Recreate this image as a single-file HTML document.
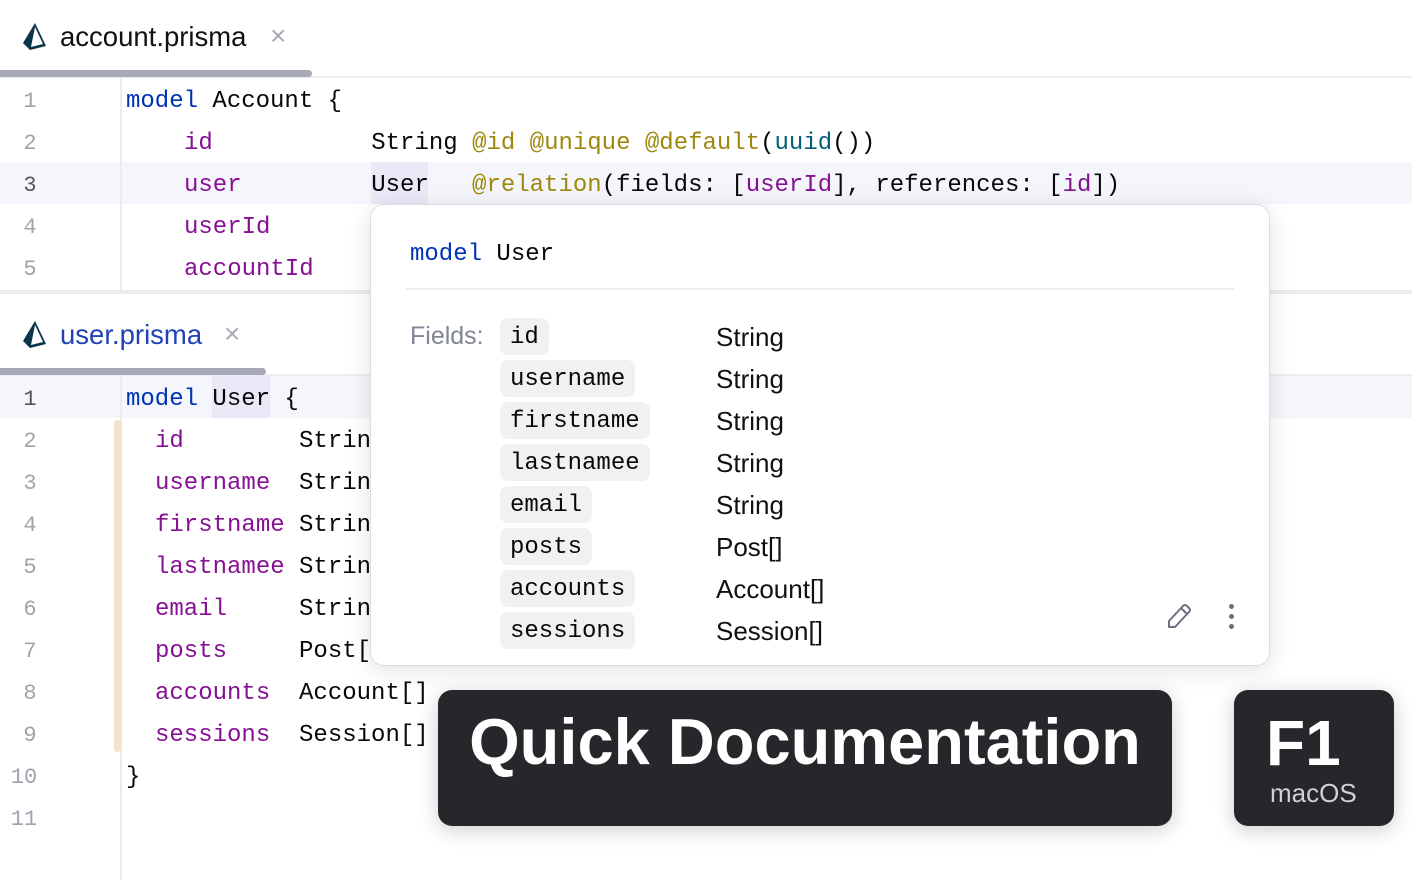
<!DOCTYPE html><html><head><meta charset="utf-8"><style>
*{margin:0;padding:0;box-sizing:border-box}
body{width:1412px;height:880px;overflow:hidden;background:#fff;position:relative;font-family:"Liberation Sans",sans-serif}
.a{position:absolute}
.m{font-family:"Liberation Mono",monospace;font-size:24px;white-space:pre;color:#080808}
.ln{position:absolute;left:0;width:60px;text-align:center;font-family:"Liberation Mono",monospace;font-size:22px;color:#a0a3ad}
.k{color:#0033b3}.p{color:#871094}.an{color:#9e880d}.t{color:#00627a}
.chip{position:absolute;left:500px;height:37px;background:#f1f1f3;border-radius:8px;padding:0 10px;line-height:40px}
.ty{position:absolute;left:716px;font-size:26px;color:#111;font-family:"Liberation Sans",sans-serif}
</style></head><body>
<svg class="a" style="left:22px;top:22px" width="26" height="30" viewBox="0 0 26 30"><path d="M13 1 L1 21 L8 28 L24 24 Z" fill="#0c344b"/><path d="M13 5 L9 25 L21 22 Z" fill="#fff"/></svg>
<div class="a" style="left:60px;top:21px;font-size:27.5px;color:#111">account.prisma</div>
<div class="a" style="left:270px;top:20px;font-size:28px;color:#a7aab6">×</div>
<div class="a" style="left:0;top:76px;width:1412px;height:2px;background:#ebecf0"></div>
<div class="a" style="left:0;top:70px;width:312px;height:7px;background:#a7aab6;border-radius:0 4px 4px 0"></div>
<div class="a" style="left:0;top:162px;width:1412px;height:42px;background:#f5f6fb"></div>
<div class="a" style="left:371px;top:162px;width:57px;height:42px;background:#ebe8f8"></div>
<div class="a" style="left:120px;top:78px;width:2px;height:212px;background:#ebecf0"></div>
<div class="ln" style="top:89px">1</div><div class="ln" style="top:131px">2</div><div class="ln" style="top:173px;color:#555">3</div><div class="ln" style="top:215px">4</div><div class="ln" style="top:257px">5</div>
<div class="a m" style="left:126px;top:88px"><span class="k">model</span> Account {</div>
<div class="a m" style="left:184px;top:130px"><span class="p">id</span>           String <span class="an">@id @unique @default</span>(<span class="t">uuid</span>())</div>
<div class="a m" style="left:184px;top:172px"><span class="p">user</span>         User   <span class="an">@relation</span>(fields: [<span class="p">userId</span>], references: [<span class="p">id</span>])</div>
<div class="a m" style="left:184px;top:214px"><span class="p">userId</span></div>
<div class="a m" style="left:184px;top:256px"><span class="p">accountId</span></div>
<div class="a" style="left:0;top:290px;width:1412px;height:4px;background:#ebecf0"></div>
<svg class="a" style="left:22px;top:320px" width="26" height="30" viewBox="0 0 26 30"><path d="M13 1 L1 21 L8 28 L24 24 Z" fill="#0c344b"/><path d="M13 5 L9 25 L21 22 Z" fill="#fff"/></svg>
<div class="a" style="left:60px;top:319px;font-size:27.5px;color:#2142b7">user.prisma</div>
<div class="a" style="left:224px;top:318px;font-size:28px;color:#a7aab6">×</div>
<div class="a" style="left:0;top:374px;width:1412px;height:2px;background:#ebecf0"></div>
<div class="a" style="left:0;top:368px;width:266px;height:7px;background:#a7aab6;border-radius:0 4px 4px 0"></div>
<div class="a" style="left:0;top:376px;width:1412px;height:42px;background:#f5f6fb"></div>
<div class="a" style="left:212px;top:376px;width:58px;height:42px;background:#ebe8f8"></div>
<div class="a" style="left:120px;top:376px;width:2px;height:504px;background:#ebecf0"></div>
<div class="a" style="left:114px;top:420px;width:7px;height:332px;background:#f3e2cc;border-radius:3px"></div>
<div class="ln" style="top:387px;color:#555">1</div><div class="ln" style="top:429px">2</div><div class="ln" style="top:471px">3</div><div class="ln" style="top:513px">4</div><div class="ln" style="top:555px">5</div><div class="ln" style="top:597px">6</div><div class="ln" style="top:639px">7</div><div class="ln" style="top:681px">8</div><div class="ln" style="top:723px">9</div><div class="ln" style="top:765px;left:-6px">10</div><div class="ln" style="top:807px;left:-6px">11</div>
<div class="a m" style="left:126px;top:386px"><span class="k">model</span> User {</div>
<div class="a m" style="left:155px;top:428px"><span class="p">id</span>        String</div>
<div class="a m" style="left:155px;top:470px"><span class="p">username</span>  String</div>
<div class="a m" style="left:155px;top:512px"><span class="p">firstname</span> String</div>
<div class="a m" style="left:155px;top:554px"><span class="p">lastnamee</span> String</div>
<div class="a m" style="left:155px;top:596px"><span class="p">email</span>     String</div>
<div class="a m" style="left:155px;top:638px"><span class="p">posts</span>     Post[]</div>
<div class="a m" style="left:155px;top:680px"><span class="p">accounts</span>  Account[]</div>
<div class="a m" style="left:155px;top:722px"><span class="p">sessions</span>  Session[]</div>
<div class="a m" style="left:126px;top:764px">}</div>
<div class="a" style="left:370px;top:204px;width:900px;height:462px;background:#fff;border:1px solid #dcdde2;border-radius:14px;box-shadow:0 4px 24px rgba(0,0,0,.12)"></div>
<div class="a m" style="left:410px;top:241px"><span class="k">model</span> User</div>
<div class="a" style="left:406px;top:288px;width:828px;height:2px;background:#ebecf0"></div>
<div class="a" style="left:410px;top:322px;font-size:25px;color:#818594">Fields:</div>
<div class="chip m" style="top:318px">id</div><div class="ty" style="top:322px">String</div>
<div class="chip m" style="top:360px">username</div><div class="ty" style="top:364px">String</div>
<div class="chip m" style="top:402px">firstname</div><div class="ty" style="top:406px">String</div>
<div class="chip m" style="top:444px">lastnamee</div><div class="ty" style="top:448px">String</div>
<div class="chip m" style="top:486px">email</div><div class="ty" style="top:490px">String</div>
<div class="chip m" style="top:528px">posts</div><div class="ty" style="top:532px">Post[]</div>
<div class="chip m" style="top:570px">accounts</div><div class="ty" style="top:574px">Account[]</div>
<div class="chip m" style="top:612px">sessions</div><div class="ty" style="top:616px">Session[]</div>
<svg class="a" style="left:1164px;top:600px" width="30" height="30" viewBox="0 0 30 30"><path d="M5 27 L5 21 L19 6 Q21 4 23 6 L25 8 Q27 10 25 12 L11 27 Z M17 8 L23 14" fill="none" stroke="#6c707e" stroke-width="2" stroke-linejoin="round"/></svg>
<div class="a" style="left:1229px;top:604px;width:5px;height:5px;border-radius:50%;background:#6c707e"></div>
<div class="a" style="left:1229px;top:614px;width:5px;height:5px;border-radius:50%;background:#6c707e"></div>
<div class="a" style="left:1229px;top:624px;width:5px;height:5px;border-radius:50%;background:#6c707e"></div>
<div class="a" style="left:438px;top:690px;width:734px;height:136px;background:#26272b;border-radius:14px;box-shadow:0 4px 20px rgba(0,0,0,.2)"></div>
<div class="a" style="left:438px;top:704px;width:734px;text-align:center;font-size:65px;font-weight:bold;color:#fff">Quick Documentation</div>
<div class="a" style="left:1234px;top:690px;width:160px;height:136px;background:#26272b;border-radius:14px;box-shadow:0 4px 20px rgba(0,0,0,.2)"></div>
<div class="a" style="left:1266px;top:706px;font-size:64px;font-weight:bold;color:#fff">F1</div>
<div class="a" style="left:1270px;top:778px;font-size:26px;color:#d0d1d6">macOS</div>
</body></html>
